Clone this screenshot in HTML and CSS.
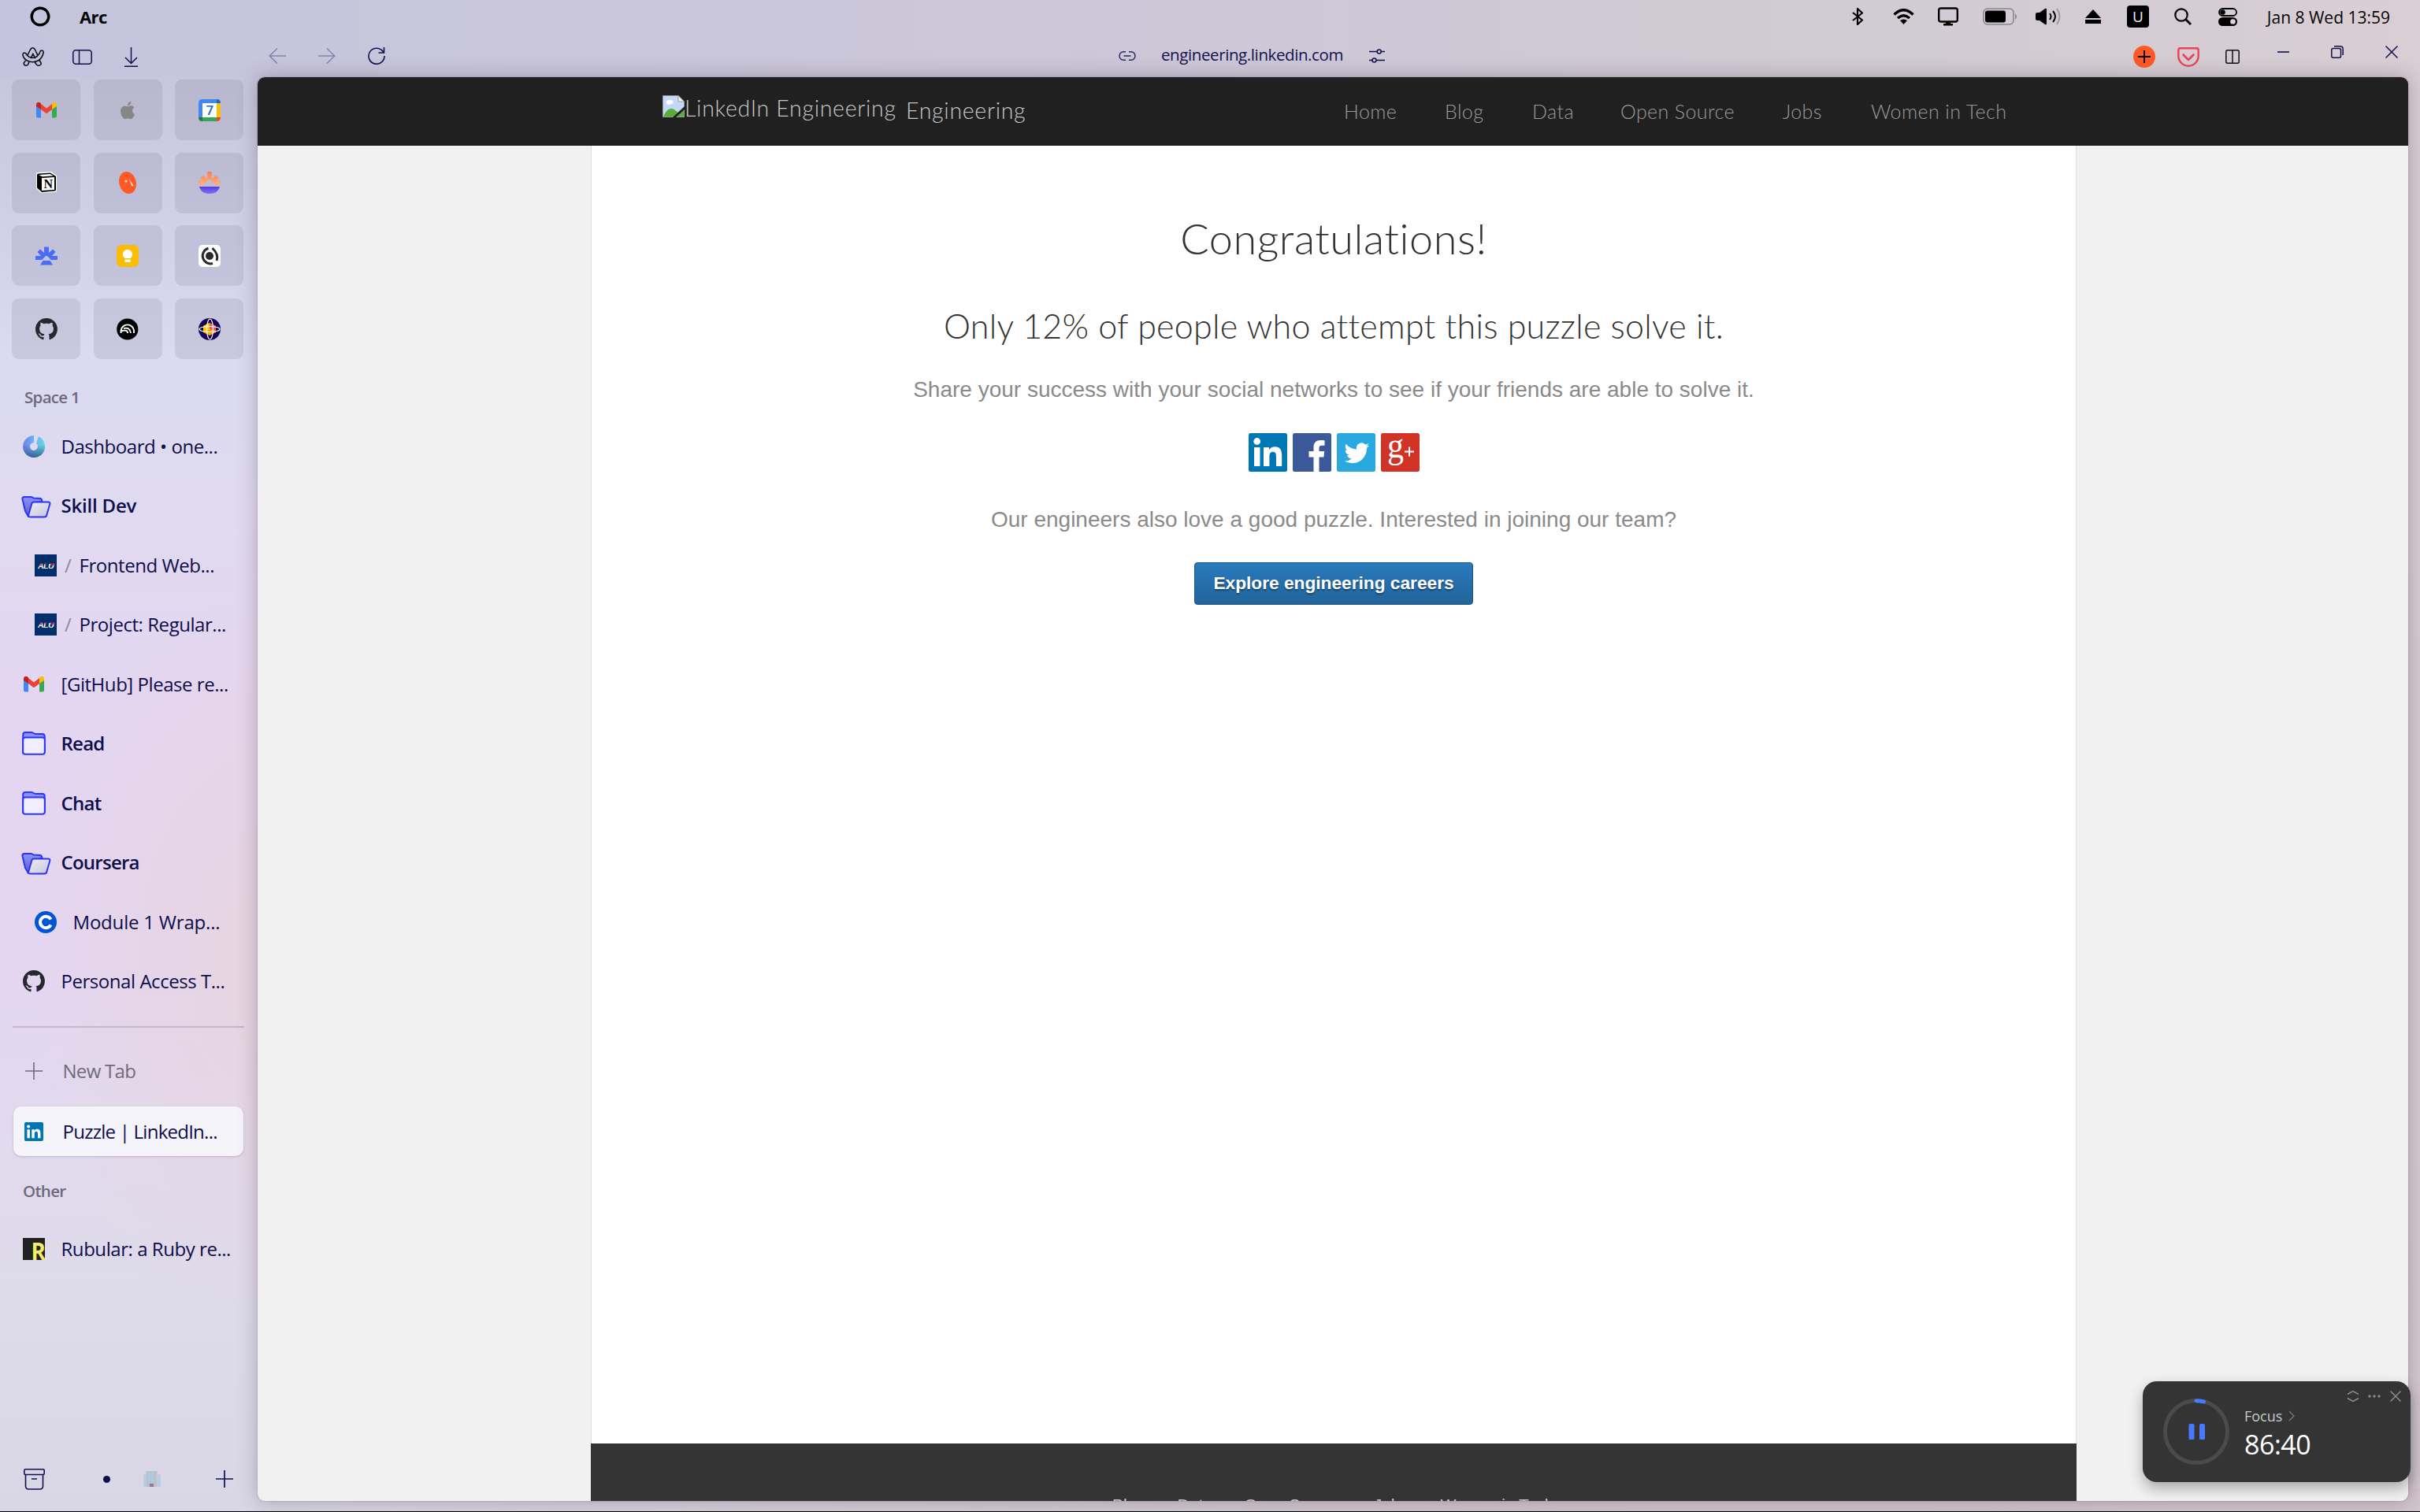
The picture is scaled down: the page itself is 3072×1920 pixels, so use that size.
FILE: index.html
```html
<!DOCTYPE html>
<html lang="en">
<head>
<meta charset="utf-8">
<title>Puzzle | LinkedIn Engineering</title>
<link rel="stylesheet" href="styles.css">
</head>
<body>
<svg class="defs" aria-hidden="true">
  <defs>
    <linearGradient id="sun" x1="0" y1="0" x2="0" y2="1"><stop offset="0" stop-color="#ff7a59"/><stop offset="1" stop-color="#ffb26b"/></linearGradient>
    <linearGradient id="sea" x1="0" y1="0" x2="0" y2="1"><stop offset="0" stop-color="#5a3be0"/><stop offset="1" stop-color="#7f74f2"/></linearGradient>
    <linearGradient id="ring" x1="0" y1=".2" x2="1" y2=".4"><stop offset="0" stop-color="#6f7ef0"/><stop offset=".5" stop-color="#6cb4ee"/><stop offset="1" stop-color="#63dbe2"/></linearGradient>
    <linearGradient id="ringshade" x1="0" y1="0" x2="0" y2="1"><stop offset=".4" stop-color="#2a3f8a" stop-opacity="0"/><stop offset="1" stop-color="#26406e" stop-opacity=".75"/></linearGradient>
    <linearGradient id="back" x1="0" y1="0" x2="0" y2="1"><stop offset="0" stop-color="#8c93ff"/><stop offset="1" stop-color="#5a5cc0"/></linearGradient>
    <linearGradient id="front" x1="0" y1="0" x2="1" y2="1"><stop offset="0" stop-color="#f0eefa"/><stop offset="1" stop-color="#c6c5d4"/></linearGradient>
  </defs>
  <symbol id="github" viewBox="0 0 16 16"><path fill="#24292e" d="M8 0C3.58 0 0 3.58 0 8c0 3.54 2.29 6.53 5.47 7.59.4.07.55-.17.55-.38 0-.19-.01-.82-.01-1.49-2.01.37-2.53-.49-2.69-.94-.09-.23-.48-.94-.82-1.13-.28-.15-.68-.52-.01-.53.63-.01 1.08.58 1.23.82.72 1.21 1.87.87 2.33.66.07-.52.28-.87.51-1.07-1.78-.2-3.64-.89-3.64-3.95 0-.87.31-1.59.82-2.15-.08-.2-.36-1.02.08-2.12 0 0 .67-.21 2.2.82.64-.18 1.32-.27 2-.27.68 0 1.36.09 2 .27 1.53-1.04 2.2-.82 2.2-.82.44 1.1.16 1.92.08 2.12.51.56.82 1.27.82 2.15 0 3.07-1.87 3.75-3.65 3.95.29.25.54.73.54 1.48 0 1.07-.01 1.93-.01 2.2 0 .21.15.46.55.38A8.013 8.013 0 0016 8c0-4.42-3.58-8-8-8z"/></symbol>
  <symbol id="gmail" viewBox="0 0 28 28"><path fill="#4285f4" d="M1 8v13.500q0 2 2 2h4V12z"/><path fill="#34a853" d="M27 8v13.500q0 2-2 2h-4V12z"/><path fill="#ea4335" d="M7 13V6l7 5.500L21 6v7l-7 5.300z"/><path fill="#c5221f" d="M1 9V7c0-3 3-4 5-2.500L7 5.500V13z"/><path fill="#fbbc04" d="M27 9V7c0-3-3-4-5-2.500L21 5.500V13z"/></symbol>
  <symbol id="folder-open" viewBox="0 0 38 28"><path d="M9 26 5 19 1.500 4Q1 1 4 1h8q2 0 3.500 1.500l9 .5q2 1 2 4L14 9z" fill="url(#back)" stroke="#2c35f5" stroke-width="2" stroke-linejoin="round"/><path d="M16 7.500h18q3 0 2.300 2.500l-4 14q-.5 2.500-3 2.500H12q-3.500 0-2.800-2.500l4-14q.8-2.500 2.800-2.500z" fill="url(#front)" stroke="#2c35f5" stroke-width="2"/></symbol>
  <symbol id="folder" viewBox="0 0 30 30"><path d="M1.200 27V4q0-3 3-3h7q2 0 3.500 1t3.500 1h7.500q3 0 3 3v20z" fill="#8b90ff" stroke="#2c35ff" stroke-width="2"/><rect x="1.200" y="7.500" width="27.600" height="21.300" rx="2.800" fill="#f0eefc" stroke="#2c35ff" stroke-width="2"/></symbol>
</svg>

<header class="menubar">
  <svg class="ring" viewBox="0 0 26 26"><circle cx="13" cy="13" r="10.800" fill="none" stroke="#000" stroke-width="3.400"/></svg>
  <span class="app">Arc</span>
  <div class="tray">
    <svg class="bt" viewBox="0 0 15 22"><path d="M1 6l12 9.500-6 5.500V1l6 5.500L1 16" fill="none" stroke="#000" stroke-width="2.200" stroke-linejoin="round"/></svg>
    <svg class="wifi" viewBox="0 0 27 20"><path d="M1.500 7.500Q13.500-4 25.500 7.500M6 12q7.500-6.500 15 0" fill="none" stroke="#000" stroke-width="3.400"/><path d="M9 15q4.500-3 9 0l-4.500 5z"/></svg>
    <svg class="mon" viewBox="0 0 26 24"><rect x="1.200" y="1.500" width="23.600" height="17" rx="2.500" fill="none" stroke="#000" stroke-width="2.400"/><path d="M10 18h6v3h3v2.500H7V21h3z"/></svg>
    <svg class="bat" viewBox="0 0 44 22"><rect x="1" y="1" width="38" height="20" rx="5" fill="none" stroke="#8b848f" stroke-width="1.600"/><rect x="3" y="3.500" width="26" height="15" rx="3"/><path d="M41 7q4 4 0 8z" fill="#8b848f"/></svg>
    <svg class="spk" viewBox="0 0 32 22"><path d="M0 8q0-2 2-2h3l7-5q2-1 2 1v18q0 2-2 1l-7-5H2q-2 0-2-2z"/><path d="M18 7q3 4 0 8M22 4q6 7 0 14" fill="none" stroke="#000" stroke-width="2"/><path d="M27 1q7 10 0 20" fill="none" stroke="#9a939e" stroke-width="1.800"/></svg>
    <svg class="eject" viewBox="0 0 20 18"><path d="M10 0 20 11H0zM0 13h20v5H0z"/></svg>
    <svg class="ubox" viewBox="0 0 28 28"><rect width="28" height="28" rx="4"/><text x="14" y="21" text-anchor="middle" font-family="Open Sans" font-size="19" fill="#eee">U</text></svg>
    <svg class="search" viewBox="0 0 22 22"><circle cx="9" cy="9" r="7.700" fill="none" stroke="#000" stroke-width="2.200"/><path d="M14.500 14.500 21 21" stroke="#000" stroke-width="2.800"/></svg>
    <svg class="cc" viewBox="0 0 24 23"><rect x="1" y="1" width="22" height="9" rx="4.500" fill="none" stroke="#000" stroke-width="1.800"/><circle cx="5.500" cy="5.500" r="3.300"/><rect y="12" width="24" height="11" rx="5.500"/><circle cx="18.500" cy="17.500" r="3.300" fill="#ddd4da"/></svg>
    <span class="clock">Jan 8 Wed 13:59</span>
  </div>
</header>

<div class="toolbar">
  <svg class="arc" viewBox="0 0 28 24"><g fill="none" stroke="#14141f" stroke-width="1.600" stroke-linejoin="round" stroke-linecap="round"><path d="M10.500 3q3-4.500 6 0l3.200 6.800M16 18.500l2 3q1 2 3.500 1.700t2.800-2.700L21.800 16M10.500 3 7.300 9.300"/><path d="M4 17.500 2.300 20q-.3 2.500 1.700 3 2.500.7 3.500-1.200L9 18.600M11.500 13.400l2.300-5.200 2.700 5.500"/><path d="M4.500 7.500Q1 6 .9 10q1.500 6 8 8 6.500 2 12.500-1.500 4.500-3.500 5.800-10Q27 3.200 23.500 4.500q-1.500 5-5 7.500-4.500 2.500-9 .5-3-1.500-5-5z"/></g></svg>
  <svg class="side" viewBox="0 0 25 19"><rect x=".8" y=".8" width="23.400" height="17.400" rx="3.500" fill="none" stroke="#10104f" stroke-width="1.500"/><path d="M8.500 1v17" stroke="#10104f" stroke-width="1.500"/></svg>
  <svg class="down" viewBox="0 0 17 25"><path d="M8.500 0v20M1 13l7.500 7.500L16 13M0 24.300h17" fill="none" stroke="#10104f" stroke-width="1.500"/></svg>
  <svg class="prev" viewBox="0 0 22 20"><path d="M22 10H1M11 .5 1.200 10 11 19.500" fill="none" stroke="#8583ac" stroke-width="1.500"/></svg>
  <svg class="next" viewBox="0 0 22 20"><path d="M0 10h21M11 .5l9.800 9.500L11 19.500" fill="none" stroke="#8583ac" stroke-width="1.500"/></svg>
  <svg class="reload" viewBox="0 0 22 22"><path d="M21 11A10 10 0 1 1 18.500 4.600L20 6.700M20.500 0v7H13.500" fill="none" stroke="#10104f" stroke-width="1.600"/></svg>
  <svg class="link" viewBox="0 0 22 12"><path d="M9 .8H6.200a5.200 5.200 0 0 0 0 10.400H9M13 .8h2.800a5.200 5.200 0 0 1 0 10.400H13M6.500 6h9" fill="none" stroke="#2a2a66" stroke-width="1.500"/></svg>
  <span class="url">engineering.linkedin.com</span>
  <svg class="tune" viewBox="0 0 20 18"><path d="M0 3.500h10M15 3.500h5M0 14.500h4M9 14.500h11" stroke="#10104f" stroke-width="1.400"/><circle cx="12.700" cy="3.500" r="2.500" fill="none" stroke="#10104f" stroke-width="1.500"/><circle cx="6.500" cy="14.500" r="2.500" fill="none" stroke="#10104f" stroke-width="1.500"/></svg>
  <svg class="plus-badge" viewBox="0 0 28 28"><circle cx="14" cy="14" r="14" fill="#ff5a26"/><path d="M14 6v16M6 14h16" stroke="#000" stroke-width="2"/></svg>
  <svg class="pocket" viewBox="0 0 28 25"><path d="M1.300 3.500q0-2.200 2.200-2.200h21q2.200 0 2.200 2.200V11a12.700 12.700 0 0 1-25.400 0z" fill="none" stroke="#ee4056" stroke-width="2.400"/><path d="m7.500 9.500 6.500 6.500 6.500-6.500" fill="none" stroke="#ee4056" stroke-width="2.600" stroke-linecap="round" stroke-linejoin="round"/></svg>
  <svg class="split" viewBox="0 0 18 18"><rect x=".8" y=".8" width="16.400" height="16.400" rx="2" fill="none" stroke="#111" stroke-width="1.500"/><path d="M9 1v16" stroke="#111" stroke-width="1.500"/></svg>
  <svg class="min" viewBox="0 0 15 16"><path d="M0 8h15" stroke="#10104f" stroke-width="1.600"/></svg>
  <svg class="max" viewBox="0 0 16 16"><rect x=".8" y="3.500" width="11.700" height="11.700" rx="2" fill="none" stroke="#10104f" stroke-width="1.500"/><path d="M4 .8h7.500q3.700 0 3.700 3.700V12" fill="none" stroke="#10104f" stroke-width="1.500"/></svg>
  <svg class="close" viewBox="0 0 16 16"><path d="m.5.5 15 15m0-15-15 15" stroke="#10104f" stroke-width="1.500"/></svg>
</div>

<div class="window">
  <aside class="sidebar">
    <div class="tiles">
      <div class="tile"><svg viewBox="0 0 28 28"><use href="#gmail"/></svg></div>
      <div class="tile"><svg viewBox="0 0 28 28"><path transform="translate(3 3) scale(.92)" fill="#868686" d="M12.152 6.896c-.948 0-2.415-1.078-3.960-1.040-2.040.027-3.910 1.183-4.961 3.014-2.117 3.675-.546 9.103 1.519 12.090 1.013 1.454 2.208 3.090 3.792 3.039 1.520-.065 2.090-.987 3.935-.987 1.831 0 2.350.987 3.960.948 1.637-.026 2.676-1.480 3.676-2.948 1.156-1.688 1.636-3.325 1.662-3.415-.039-.013-3.182-1.221-3.220-4.857-.026-3.040 2.480-4.494 2.597-4.559-1.429-2.090-3.623-2.324-4.390-2.376-2-.156-3.675 1.090-4.610 1.090zM15.530 3.830c.843-1.012 1.400-2.427 1.245-3.830-1.207.052-2.662.805-3.532 1.818-.780.896-1.454 2.338-1.273 3.714 1.338.104 2.715-.688 3.559-1.701"/></svg></div>
      <div class="tile"><svg viewBox="0 0 28 28"><path fill="#4285f4" d="M5 0h18v5H5v18H0V5q0-5 5-5z"/><path fill="#1967d2" d="M23 0q5 0 5 5h-5z"/><path fill="#fbbc04" d="M23 5h5v18h-5z"/><path fill="#34a853" d="M5 23h18v5H5z"/><path fill="#188038" d="M0 23h5v5q-5 0-5-5z"/><path fill="#ea4335" d="M23 23h5q0 5-5 5z"/><rect x="5" y="5" width="18" height="18" fill="#fff"/><text x="14" y="20" text-anchor="middle" font-family="Roboto" font-weight="500" font-size="17" fill="#1967d2">7</text></svg></div>
      <div class="tile"><svg viewBox="0 0 28 28"><path d="M1 3q0-2 2-2l17-1 7 5v19q0 2-2 2L7 27l-6-6z" fill="#fff"/><path d="M2 4q0-1.500 1.500-1.500L19 1.500 26 6v17q0 1.500-1.500 1.600L8 26l-6-5.500z"/><path d="M4.500 4 18.500 3l4.500 2.200L8.500 6.300zM8 8l16-1v16L8 24z" fill="#fff"/><text x="16" y="21" text-anchor="middle" font-family="Liberation Serif" font-weight="700" font-size="16">N</text></svg></div>
      <div class="tile"><svg viewBox="0 0 28 28"><ellipse cx="14" cy="14" rx="10.700" ry="14.200" transform="rotate(-14 14 14)" fill="#ff5a26"/><circle cx="12" cy="12" r="1.600" fill="#f7d0cc"/><path d="m15.500 8.500 6 9.500-2 .500z" fill="#fff"/></svg></div>
      <div class="tile"><svg viewBox="0 0 28 28"><path d="M0 16.500v-5h5.500L2.500 8 6 4.500l4.500 4.500.800-.500V0h5.400v8.500l.800.500L22 4.500 25.500 8l-3 3.500H28v5h-6.500L14 9.500 6.500 16.500z" fill="url(#sun)"/><path d="M1 19h26q-2.500 9-13 9T1 19z" fill="url(#sea)"/></svg></div>
      <div class="tile"><svg viewBox="0 0 28 28"><path d="M0 19v-5h7L2.500 9 6 5.500l5 4.500V2.500h6V10l5-4.500L25.500 9 21 14h7v5h-8l-5-5h-2l-5 5zM9.500 20h9L22 25.500H6z" fill="#4a6cf7"/></svg></div>
      <div class="tile"><svg viewBox="0 0 28 28"><rect width="28" height="28" rx="6" fill="#fbbc04"/><path d="M14 6a6 6 0 0 1 4 10.500v.500h-8v-.500A6 6 0 0 1 14 6zM10.500 18.500h7V22h-7z" fill="#fff"/></svg></div>
      <div class="tile"><svg viewBox="0 0 28 28"><rect width="28" height="28" rx="5" fill="#fff"/><circle cx="14" cy="14" r="5" fill="#2a2a2a"/><path d="M12.500 4.200A10 10 0 1 0 18 23.500M17.500 4q8.500 8 5.500 16" fill="none" stroke="#2a2a2a" stroke-width="3"/></svg></div>
      <div class="tile"><svg viewBox="0 0 16 16"><use href="#github"/></svg></div>
      <div class="tile"><svg viewBox="0 0 28 28"><circle cx="13.800" cy="14" r="13.600"/><path d="M5.500 19v-3.500a8.300 8 0 0 1 16.500 0V19M9 13q8-2 9 6M6 16.500q8-2.500 8 2.500" fill="none" stroke="#fff" stroke-width="1.900"/></svg></div>
      <div class="tile"><svg viewBox="0 0 28 28"><circle cx="14" cy="14" r="14" fill="#150458"/><path d="m14 6 8 4v8l-8 4-8-4v-8z" fill="#f5a50a"/><path d="M14 6v8l-8 4v-8z" fill="#ffca00"/><path d="m14 6 8 4v6l-8-2z" fill="#f25c54"/><ellipse cx="14" cy="14" rx="13" ry="3.500" fill="none" stroke="#fff" stroke-width="1.200"/><ellipse cx="14.500" cy="14" rx="4" ry="13" fill="none" stroke="#fff" stroke-width="1.200"/></svg></div>
    </div>

    <h2 class="group">Space 1</h2>
    <ul class="tabs">
      <li><svg class="fav" viewBox="0 0 28 28"><path d="M14 0v9A5 5 0 1 0 17 10l3-8.700A14 14 0 1 1 14 0z" fill="url(#ring)"/><path d="M14 0v9A5 5 0 1 0 17 10l3-8.700A14 14 0 1 1 14 0z" fill="url(#ringshade)"/></svg><span>Dashboard • one...</span></li>
      <li><svg class="fo" viewBox="0 0 38 28"><use href="#folder-open"/></svg><b class="wide">Skill Dev</b></li>
      <li class="sub"><svg class="fav" viewBox="0 0 28 28"><rect width="28" height="28" fill="#002f6c"/><text x="14" y="17.500" text-anchor="middle" textLength="20" lengthAdjust="spacingAndGlyphs" font-family="Liberation Sans" font-weight="700" font-style="italic" font-size="9" fill="#fff">ALU</text><path d="M7.500 11h2.500l-1 2.500H6.500zM20 11h1.700v3H20zM23 11h1.700v3H23zM13 11h1.700v2.500H13z" fill="#d3213c"/></svg><i class="slash">/</i><span>Frontend Web...</span></li>
      <li class="sub"><svg class="fav" viewBox="0 0 28 28"><rect width="28" height="28" fill="#002f6c"/><text x="14" y="17.500" text-anchor="middle" textLength="20" lengthAdjust="spacingAndGlyphs" font-family="Liberation Sans" font-weight="700" font-style="italic" font-size="9" fill="#fff">ALU</text><path d="M7.500 11h2.500l-1 2.500H6.500zM20 11h1.700v3H20zM23 11h1.700v3H23zM13 11h1.700v2.500H13z" fill="#d3213c"/></svg><i class="slash">/</i><span>Project: Regular...</span></li>
      <li><svg class="fav" viewBox="0 0 28 28"><use href="#gmail"/></svg><span>[GitHub] Please re...</span></li>
      <li><svg class="fc" viewBox="0 0 30 30"><use href="#folder"/></svg><b>Read</b></li>
      <li><svg class="fc" viewBox="0 0 30 30"><use href="#folder"/></svg><b>Chat</b></li>
      <li><svg class="fo" viewBox="0 0 38 28"><use href="#folder-open"/></svg><b>Coursera</b></li>
      <li class="sub"><svg class="fav" viewBox="0 0 28 28"><circle cx="14" cy="14" r="14" fill="#0056d2"/><path d="M20.500 10.500a7.200 7.200 0 1 0 0 7" fill="none" stroke="#fff" stroke-width="4"/></svg><span class="module">Module 1 Wrap...</span></li>
      <li><svg class="fav" viewBox="0 0 16 16"><use href="#github"/></svg><span>Personal Access T...</span></li>
    </ul>
    <hr class="rule">
    <div class="newtab"><svg viewBox="0 0 22 22"><path d="M11 0v22M0 11h22" stroke="#6f6a7a" stroke-width="1.600"/></svg><span>New Tab</span></div>
    <div class="active"><svg viewBox="0 0 24 24"><rect width="24" height="24" rx="2" fill="#0077b5"/><path d="M3.500 9.200h3.400V20.300H3.500zM9.300 9.200h3.300v1.500c1-1.700 2.300-1.900 3.500-1.900 3.500 0 4.300 2.200 4.300 5.200v6.300H17v-5.700c0-1.500-.2-2.900-1.900-2.900s-2.300 1.200-2.300 2.900v5.700H9.300z" fill="#fff"/><circle cx="5.200" cy="5.500" r="2" fill="#fff"/></svg><span>Puzzle | LinkedIn...</span></div>
    <h2 class="group other">Other</h2>
    <div class="rub"><svg viewBox="0 0 28 28"><rect width="28" height="28" fill="#222"/><text x="10.500" y="27.500" font-family="Open Sans" font-weight="700" font-size="31" textLength="18" lengthAdjust="spacingAndGlyphs" fill="#f1f065">R</text></svg><span>Rubular: a Ruby re...</span></div>
    <footer class="dock">
      <svg class="archive" viewBox="0 0 27 27"><rect x=".8" y=".8" width="25.400" height="6.700" rx="1.500" fill="none" stroke="#10104f" stroke-width="1.600"/><path d="M2.500 7.500V22q0 4 4 4h14q4 0 4-4V7.500M10 13h7" fill="none" stroke="#10104f" stroke-width="1.600"/></svg>
      <i class="dot"></i>
      <svg class="bldg" viewBox="0 0 22 22"><path d="M0 5h4v16H0zM18 5h4v16h-4z" fill="#b9cfe0"/><rect x="3.500" y="1" width="14" height="20" fill="#c3bccb"/><path d="M6 3h3v3H6zM10 3h3v3h-3zM6 7.500h3v3H6zM10 7.500h3v3h-3zM6 12h3v3H6zM10 12h3v3h-3z" fill="#96d6ef"/><path d="M8 17h5v4H8z" fill="#8a8090"/></svg>
      <svg class="add" viewBox="0 0 22 22"><path d="M11 0v22M0 11h22" stroke="#10104f" stroke-width="1.700"/></svg>
    </footer>
  </aside>

  <main class="page">
    <nav class="sitenav">
      <svg class="broken" viewBox="0 0 28 28"><path d="M.5.500H20l7.500 7.500v19.500H.5z" fill="#c5d8f7" stroke="#9a9a9a"/><path d="M1 27q7-15 15-8l4 3 7-5v10z" fill="#5bae35"/><circle cx="8" cy="9" r="3" fill="#fff"/><circle cx="11" cy="8.500" r="2.500" fill="#fff"/><path d="M20 .500V8h7.500z" fill="#f4f4f4" stroke="#9a9a9a"/><path d="M28 14 13 28h4l11-10z" fill="#202020"/></svg>
      <span class="alt">LinkedIn Engineering</span>
      <span class="eng">Engineering</span>
      <a class="n1">Home</a><a class="n2">Blog</a><a class="n3">Data</a><a class="n4">Open Source</a><a class="n5">Jobs</a><a class="n6">Women in Tech</a>
    </nav>
    <div class="column">
      <h1>Congratulations!</h1>
      <h3>Only 12% of people who attempt this puzzle solve it.</h3>
      <p class="share">Share your success with your social networks to see if your friends are able to solve it.</p>
      <div class="social">
        <svg viewBox="0 0 49 49"><rect width="49" height="49" rx="2.500" fill="#0077b5"/><path d="M7 18h7.500v24H7zM19 18h7v3.300c2-3.300 4.800-4 7.200-4 7.300 0 9 4.700 9 11.200V42H35V30c0-3.200-.5-6.200-4-6.200s-4.600 2.700-4.600 6.200v12H19z" fill="#fff"/><circle cx="10.700" cy="10.500" r="4.400" fill="#fff"/></svg>
        <svg viewBox="0 0 49 49"><rect width="49" height="49" rx="2.500" fill="#3b5998"/><path d="M26.500 49V30.500h-6V23h6v-5c0-6 3.500-9 8.800-9 2.500 0 4.200.2 5.200.4v6.400h-3.700c-2.700 0-3.300 1.400-3.300 3.400V23h6.700l-.8 7.500h-5.900V49z" fill="#fff"/></svg>
        <svg viewBox="0 0 49 49"><rect width="49" height="49" rx="2.500" fill="#2aa9e0"/><path transform="translate(9.500 9.500) scale(1.320)" fill="#fff" d="M23.953 4.570a10 10 0 01-2.825.775 4.958 4.958 0 002.163-2.723c-.951.555-2.005.959-3.127 1.184a4.920 4.920 0 00-8.384 4.482C7.690 8.095 4.067 6.130 1.640 3.162a4.822 4.822 0 00-.666 2.475c0 1.710.870 3.213 2.188 4.096a4.904 4.904 0 01-2.228-.616v.060a4.923 4.923 0 003.946 4.827 4.996 4.996 0 01-2.212.085 4.936 4.936 0 004.604 3.417 9.867 9.867 0 01-6.102 2.105c-.390 0-.779-.023-1.170-.067a13.995 13.995 0 007.557 2.209c9.053 0 13.998-7.496 13.998-13.985 0-.210 0-.420-.015-.630A9.935 9.935 0 0024 4.590z"/></svg>
        <svg viewBox="0 0 49 49"><rect width="49" height="49" rx="2.500" fill="#d13426"/><text x="8" y="31" font-family="Liberation Serif" font-size="46" textLength="21" lengthAdjust="spacingAndGlyphs" fill="#fff">g</text><path d="M30 23.500h12M36 17.500v12" stroke="#fff" stroke-width="2"/></svg>
      </div>
      <p class="join">Our engineers also love a good puzzle. Interested in joining our team?</p>
      <a class="button">Explore engineering careers</a>
      <div class="foot"><span>Blog</span><span>Data</span><span>Open Source</span><span>Jobs</span><span>Women in Tech</span></div>
    </div>
  </main>
</div>

<section class="timer">
  <svg class="dial" viewBox="0 0 84 84"><circle cx="42" cy="42" r="39.500" fill="none" stroke="#4b4b4b" stroke-width="5"/><path d="M42 2.700a39.300 39.300 0 0 1 9.500 1.200" fill="none" stroke="#4a78ff" stroke-width="5" stroke-linecap="round"/><rect x="32.500" y="32" width="7" height="20" rx="1.500" fill="#4a78ff"/><rect x="46" y="32" width="7" height="20" rx="1.500" fill="#4a78ff"/></svg>
  <div class="readout"><span class="label"><span>Focus</span><svg viewBox="0 0 8 14"><path d="m1 1 6 6-6 6" fill="none" stroke="#7a7a7a" stroke-width="1.300"/></svg></span><span class="time">86:40</span></div>
  <svg class="ctl" viewBox="0 0 70 16"><path d="m1 5.500 7-4 7 4M1 10.500l7 4 7-4" fill="none" stroke="#8c8c8c" stroke-width="1.500"/><g fill="#8c8c8c"><circle cx="29" cy="8" r="1.700"/><circle cx="35" cy="8" r="1.700"/><circle cx="41" cy="8" r="1.700"/></g><path d="m55.500 1.500 13 13m0-13-13 13" stroke="#8c8c8c" stroke-width="1.500"/></svg>
</section>
</body>
</html>
```
FILE: styles.css
```css
* { box-sizing: border-box; }
body {
  margin: 0;
  width: 3072px;
  height: 1920px;
  overflow: hidden;
  display: flex;
  flex-direction: column;
  position: relative;
  border-bottom: 1px solid #000;
  white-space: nowrap;
  font-family: "Open Sans", "Noto Sans", sans-serif;
  background:
    linear-gradient(90deg, #c5c4de 0, #c8c6db 500px, #cdc7d8 1500px, #d1cbd3 2400px, #d9ced4 3072px) 0 0 / 100% 98px no-repeat,
    radial-gradient(ellipse 300px 480px at 340px 1120px, rgba(232, 212, 218, .75), rgba(232, 212, 218, 0)) 0 98px / 327px 1822px no-repeat,
    linear-gradient(90deg, #d8d6e4 0, #d0c4cc 1500px, #d2c5cb 2745px) 327px 1890px / 2745px 30px no-repeat,
    linear-gradient(#d9ced4, #d5c9cf) 3050px 98px / 22px 1822px no-repeat,
    linear-gradient(#c7c6dd 98px, #cfcfe6 270px, #dadaf0 450px, #e0daf0 650px, #e4d6f1 880px, #e4d6f1 1250px, #e2daee 1450px, #dddbe9 1660px, #d9d7e5 1920px);
}
.defs { position: absolute; width: 0; height: 0; }
svg { display: block; flex: none; }
h1, h2, h3, p, ul { margin: 0; padding: 0; }

.menubar { height: 44px; display: flex; align-items: center; padding: 0 38px 2px; color: #050505; }
.ring { width: 26px; }
.app { margin-left: 37px; font-size: 22px; font-weight: 700; line-height: 44px; letter-spacing: -.6px; }
.tray { margin-left: auto; display: flex; align-items: center; }
.bt { width: 15px; }
.wifi { width: 27px; margin-left: 37px; }
.mon { width: 26px; margin-left: 30px; }
.bat { width: 44px; margin-left: 31px; }
.spk { width: 32px; margin-left: 23px; }
.eject { width: 20px; margin-left: 31px; }
.ubox { width: 28px; margin-left: 33px; }
.search { width: 22px; margin-left: 32px; }
.cc { width: 24px; margin-left: 34px; }
.clock { margin-left: 38px; padding-top: 2px; font-size: 21px; line-height: 44px; }

.toolbar { height: 54px; display: flex; align-items: center; padding: 2px 28px 0; }
.arc { width: 28px; }
.side { width: 25px; margin-left: 36px; }
.down { width: 17px; margin-left: 41px; }
.prev { width: 22px; margin: 0 0 3px 166px; }
.next { width: 22px; margin: 0 0 3px 41px; }
.reload { width: 22px; margin: 0 0 2px 41px; }
.link { width: 22px; margin: 0 0 3px 931px; }
.url { width: 264px; padding: 0 0 6px 32px; font-size: 20.500px; line-height: 40px; letter-spacing: -.4px; color: #12124f; }
.tune { width: 20px; margin: 0 0 2px 32px; }
.plus-badge { width: 28px; margin-left: auto; }
.pocket { width: 28px; margin-left: 28px; }
.split { width: 18px; margin-left: 33px; }
.min { width: 15px; margin: 0 0 13px 48px; }
.max { width: 16px; margin: 0 0 13px 53px; }
.close { width: 16px; margin: 0 0 13px 53px; }

.window { flex: 1; display: flex; padding: 0 15px 13px 0; }
.sidebar { width: 327px; display: flex; flex-direction: column; padding-top: 3px; color: #0d0d4a; font-size: 24px; letter-spacing: -.45px; }
.tiles { display: grid; grid-template-columns: repeat(3, 87px); grid-auto-rows: 77px; gap: 15.700px 16.500px; padding-left: 15px; }
.tile { display: flex; align-items: center; justify-content: center; border-radius: 9px; background: rgba(100, 100, 130, .15); }
.tile svg { width: 28px; height: 28px; }
.group { height: 73px; padding-left: 31px; font-size: 20.500px; font-weight: 600; line-height: 96px; letter-spacing: -.7px; color: #6d697b; }
.tabs { list-style: none; }
.tabs li { height: 75.500px; display: flex; align-items: center; padding-left: 29px; line-height: 40px; }
.tabs li.sub { padding-left: 44px; }
.tabs b { font-weight: 600; letter-spacing: -.75px; }
.tabs b.wide { letter-spacing: -.2px; }
.fav { width: 28px; height: 28px; margin-right: 20.500px; }
.sub .fav { margin-right: 10px; }
.fo { width: 38px; height: 28px; margin: 4px 12.500px 0 -2px; }
.fc { width: 30px; height: 30px; margin: 0 19.500px 0 -1px; }
.slash { width: 18.500px; color: #8d889c; font-style: normal; }
.sub .module { margin-left: 10.500px; letter-spacing: -.2px; }
.rule { width: 294px; height: 2px; margin: 19px 0 0 16px; border: 0; background: #c4b7cb; }
.newtab { height: 100px; padding: 10px 0 0 32px; display: flex; align-items: center; color: #6f6a7a; line-height: 40px; letter-spacing: -.7px; }
.newtab svg { width: 22px; margin-right: 25.500px; }
.active { width: 292px; height: 63px; margin-left: 17px; padding-left: 14px; display: flex; align-items: center; border-radius: 10px; background: #f6f4fb; box-shadow: 0 1px 3px rgba(60, 40, 90, .22); line-height: 40px; letter-spacing: -.75px; }
.active svg { width: 24px; margin-right: 24.500px; }
.other { height: 80px; padding-left: 29px; line-height: 88px; }
.rub { height: 76px; padding-left: 29px; display: flex; align-items: center; line-height: 40px; }
.rub svg { width: 28px; margin-right: 20.500px; }
.dock { margin-top: auto; height: 56px; padding-left: 30px; display: flex; align-items: center; }
.archive { width: 27px; }
.dot { width: 9px; height: 9px; margin-left: 74px; border-radius: 50%; background: #0d0d4a; }
.bldg { width: 22px; margin-left: 42px; }
.add { width: 22px; margin-left: 70px; }

.page { flex: 1; display: flex; flex-direction: column; overflow: hidden; border-radius: 9px; background: #f1f1f1; box-shadow: 0 0 26px rgba(60, 40, 60, .3), 0 0 2px rgba(60, 40, 60, .3); font-family: Lato, sans-serif; }
.sitenav { height: 87px; display: flex; align-items: flex-start; padding: 19px 0 0 514px; background: #202020; color: #c8c8c8; font-weight: 300; border-bottom: 1px solid #121212; }
.broken { width: 28px; margin-top: 4px; }
.alt, .eng { font-size: 28.500px; line-height: 40px; letter-spacing: .7px; }
.alt { width: 281px; }
.eng { width: 556px; padding-top: 3px; }
.sitenav a { font-size: 25px; line-height: 40px; padding-top: 4px; letter-spacing: .4px; color: #9a9a9a; }
.n1 { width: 128px; } .n2 { width: 111px; } .n3 { width: 112px; } .n4 { width: 206px; } .n5 { width: 112px; }
.column { flex: 1; width: 1886px; margin-left: 423px; display: flex; flex-direction: column; align-items: center; background: #fff; border: 1px solid #dedede; border-width: 0 1px; text-align: center; color: #333; }
h1 { margin-top: 83px; font-size: 54px; font-weight: 300; line-height: 70px; letter-spacing: .55px; }
h3 { margin-top: 46px; font-size: 43px; font-weight: 300; line-height: 60px; letter-spacing: .25px; }
.share, .join { font: 28px/40px "Liberation Sans", sans-serif; color: #8a8a8a; }
.share { margin-top: 31px; }
.social { display: flex; gap: 7px; margin-top: 35px; }
.social svg { width: 49px; }
.join { margin-top: 41px; }
.button { width: 354px; height: 54px; margin-top: 34px; border: 1px solid #1c5687; border-radius: 4px; background: linear-gradient(#287bbc, #23639a); color: #fff; font: 700 22.700px/51px "Liberation Sans", sans-serif; text-shadow: 0 2px 2px rgba(0, 0, 0, .4); }
.foot { align-self: stretch; flex: none; height: 73px; margin: auto -1px 0; display: flex; align-items: flex-start; overflow: hidden; gap: 40.500px; padding: 64px 0 0 662px; background: #333; color: #c9c9c9; font: 21px/28px "Liberation Sans", sans-serif; }

.timer { position: absolute; left: 2720px; top: 1754px; width: 340px; height: 128px; display: flex; border-radius: 18px; background: #343434; box-shadow: 0 8px 18px rgba(0, 0, 0, .3); color: #fff; }
.dial { width: 84px; height: 84px; margin: 22px 19px 0 26px; }
.readout { display: flex; flex-direction: column; padding-top: 29px; width: 130px; }
.label { display: flex; align-items: center; gap: 8px; font-size: 18px; line-height: 30px; color: #c9c9c9; }
.label svg { width: 8px; }
.time { font-size: 34px; line-height: 42px; letter-spacing: -.5px; }
.ctl { width: 70px; height: 16px; margin-top: 11px; }
```
